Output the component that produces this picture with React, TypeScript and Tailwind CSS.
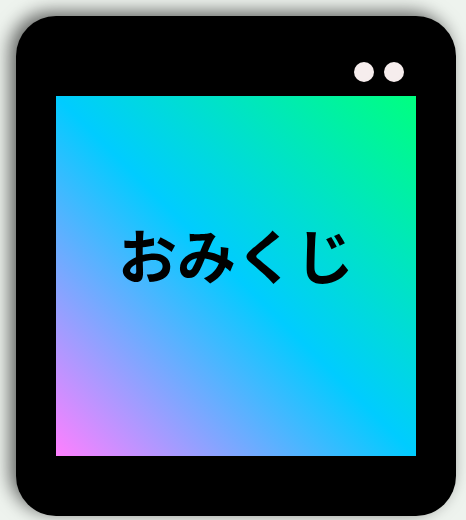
export default function App() {
  return (
    <div className="min-h-[520px] w-[466px] bg-[#eef3ee] p-4">
      <div className="flex h-[500px] w-[440px] flex-col rounded-[40px] bg-black px-10 pt-[46px] shadow-[-6px_-4px_18px_rgba(0,0,0,0.6)]">
        {/* lamps */}
        <div className="flex h-5 justify-end gap-2.5 pr-3">
          <span className="h-5 w-5 rounded-full bg-[#f6eded]" />
          <span className="h-5 w-5 rounded-full bg-[#f6eded]" />
        </div>

        {/* screen */}
        <div className="mt-[14px] flex h-[360px] w-[360px] items-center justify-center bg-[linear-gradient(45deg,#ff80ff,#00ccff_50%,#00ff80)] pb-[44px]">
          <p className="font-['Noto_Sans_CJK_JP',sans-serif] text-[59px] font-bold text-black">
            おみくじ
          </p>
        </div>
      </div>
    </div>
  );
}
